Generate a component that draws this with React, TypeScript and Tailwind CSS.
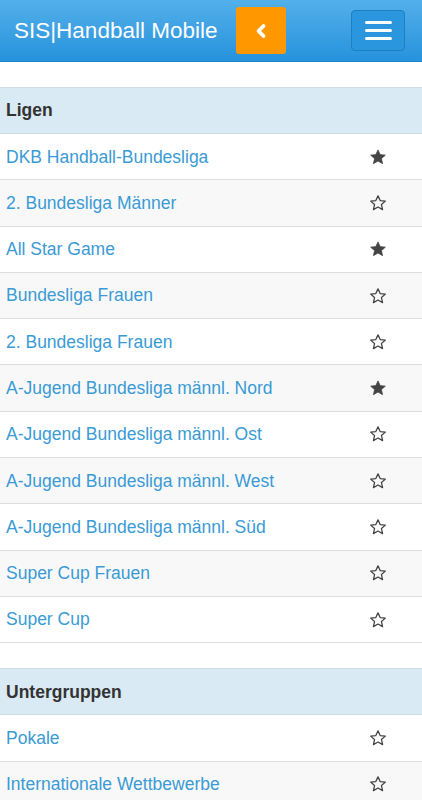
import { ChevronLeft } from 'lucide-react'

type Item = { name: string; fav: boolean }

const ligen: Item[] = [
  { name: 'DKB Handball-Bundesliga', fav: true },
  { name: '2. Bundesliga Männer', fav: false },
  { name: 'All Star Game', fav: true },
  { name: 'Bundesliga Frauen', fav: false },
  { name: '2. Bundesliga Frauen', fav: false },
  { name: 'A-Jugend Bundesliga männl. Nord', fav: true },
  { name: 'A-Jugend Bundesliga männl. Ost', fav: false },
  { name: 'A-Jugend Bundesliga männl. West', fav: false },
  { name: 'A-Jugend Bundesliga männl. Süd', fav: false },
  { name: 'Super Cup Frauen', fav: false },
  { name: 'Super Cup', fav: false },
]

const untergruppen: Item[] = [
  { name: 'Pokale', fav: false },
  { name: 'Internationale Wettbewerbe', fav: false },
]

function Star({ filled }: { filled: boolean }) {
  return (
    <svg width="18" height="18" viewBox="0 0 24 24">
      <path
        d="M12 2.5l2.9 6.3 6.9.7-5.2 4.6 1.5 6.8L12 17.4l-6.1 3.5 1.5-6.8-5.2-4.6 6.9-.7z"
        fill={filled ? '#444' : 'none'}
        stroke="#444"
        strokeWidth={filled ? 1 : 1.7}
        strokeLinejoin="round"
      />
    </svg>
  )
}

function Section({ title, items }: { title: string; items: Item[] }) {
  return (
    <div>
      <div className="h-[47px] flex items-center px-[6px] bg-[#d9eaf4] border-y border-[#cfdde6] text-[17.5px] font-bold text-[#333]">
        {title}
      </div>
      {items.map((item, i) => (
        <div
          key={item.name}
          className={`h-[46.3px] flex items-center px-[6px] border-b border-[#dddddd] ${
            i % 2 === 1 ? 'bg-[#f8f8f9]' : 'bg-white'
          }`}
        >
          <span className="flex-1 text-[17.5px] text-[#3a9bd5]">{item.name}</span>
          <span className="w-[18px] mr-[29px] flex justify-center">
            <Star filled={item.fav} />
          </span>
        </div>
      ))}
    </div>
  )
}

export default function App() {
  return (
    <div className="w-[422px] h-[800px] overflow-hidden bg-white" style={{ fontFamily: '"Liberation Sans", Arial, sans-serif' }}>
      <div className="h-[62px] flex items-center bg-gradient-to-b from-[#52b0ea] to-[#2592dc] border-b border-[#1f84c9]">
        <span className="ml-[14px] text-[22.5px] text-white">SIS|Handball Mobile</span>
        <button className="ml-[19px] w-[50px] h-[47px] rounded-[3px] bg-[#ff9800] flex items-center justify-center">
          <ChevronLeft size={20} strokeWidth={4.5} color="white" />
        </button>
        <button className="ml-auto mr-[17px] w-[54px] h-[41px] rounded-[4px] border border-[#1f7fc0] bg-[#2a96de] flex flex-col items-center justify-center gap-[5px]">
          <span className="block w-[27px] h-[3px] bg-white rounded-sm" />
          <span className="block w-[27px] h-[3px] bg-white rounded-sm" />
          <span className="block w-[27px] h-[3px] bg-white rounded-sm" />
        </button>
      </div>
      <div className="h-[25px]" />
      <Section title="Ligen" items={ligen} />
      <div className="h-[25px]" />
      <Section title="Untergruppen" items={untergruppen} />
    </div>
  )
}
